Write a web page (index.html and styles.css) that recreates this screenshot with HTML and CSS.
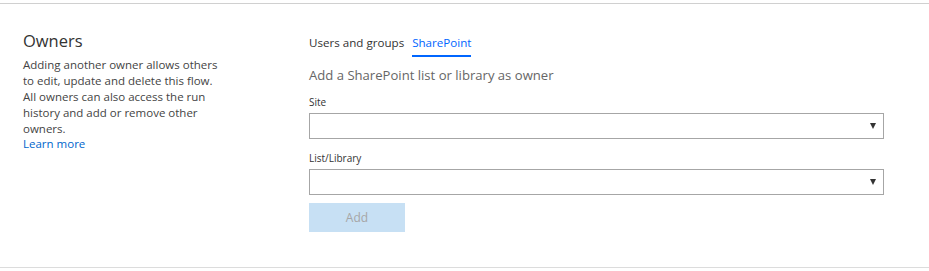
FILE: index.html
```html
<!DOCTYPE html>
<html>
<head>
<meta charset="utf-8">
<link rel="stylesheet" href="styles.css">
</head>
<body>
<section class="panel">
  <div class="info">
    <h2 class="title">Owners</h2>
    <p class="desc">Adding another owner allows others to edit, update and delete this flow. All owners can also access the run history and add or remove other owners.</p>
    <a class="link" href="#">Learn more</a>
  </div>
  <div class="form">
    <div class="tabs">
      <span class="tab">Users and groups</span>
      <span class="tab active">SharePoint</span>
    </div>
    <div class="subtitle">Add a SharePoint list or library as owner</div>
    <div class="field">
      <label class="label">Site</label>
      <div class="select"><span class="arrow"></span></div>
    </div>
    <div class="field">
      <label class="label">List/Library</label>
      <div class="select"><span class="arrow"></span></div>
    </div>
    <button class="btn" disabled>Add</button>
  </div>
</section>
</body>
</html>
```
FILE: styles.css
```css
* { box-sizing: border-box; }
html, body { margin: 0; padding: 0; background: #fff; }
body {
  padding-top: 3px;
  font-family: "Open Sans", "Noto Sans", sans-serif;
  color: #333;
}
.panel {
  height: 265px;
  border-top: 1px solid #d0d0d0;
  border-bottom: 1px solid #dcdcdc;
  display: flex;
  padding: 26px 0 0 23px;
}
.info { width: 205px; }
.title {
  margin: 0;
  font-size: 16.5px;
  line-height: 22px;
  font-weight: 400;
  color: #333;
}
.desc {
  margin: 5px 0 0;
  font-size: 11.5px;
  line-height: 16px;
  color: #444;
}
.link {
  display: block;
  font-size: 11.5px;
  line-height: 16px;
  color: #0066cc;
  text-decoration: none;
  margin-top: -1px;
}
.form {
  margin-left: 81px;
  width: 575px;
  padding-top: 4px;
}
.tabs { display: flex; gap: 8px; }
.tab {
  font-size: 11.6px;
  line-height: 18px;
  padding-bottom: 3px;
  color: #333;
  border-bottom: 2px solid transparent;
}
.tab.active {
  color: #0066ff;
  border-bottom-color: #0066ff;
  font-weight: 500;
}
.subtitle {
  margin-top: 9px;
  font-size: 13.1px;
  line-height: 18px;
  color: #666;
}
.field { margin-top: 11px; }
.field + .field { margin-top: 12px; }
.label {
  display: block;
  font-size: 10px;
  line-height: 14px;
  color: #333;
  margin-bottom: 4px;
}
.select {
  height: 26px;
  border: 1px solid #a6a6a6;
  position: relative;
  display: flex;
  align-items: center;
  justify-content: flex-end;
  padding-right: 7px;
}
.arrow {
  width: 0; height: 0;
  border-left: 3px solid transparent;
  border-right: 3px solid transparent;
  border-top: 6px solid #333;
}
.btn {
  margin-top: 8px;
  width: 96px;
  height: 29px;
  border: none;
  background: #c7e0f4;
  color: #a6a6a6;
  font-family: inherit;
  font-size: 12px;
  display: block;
}
```
